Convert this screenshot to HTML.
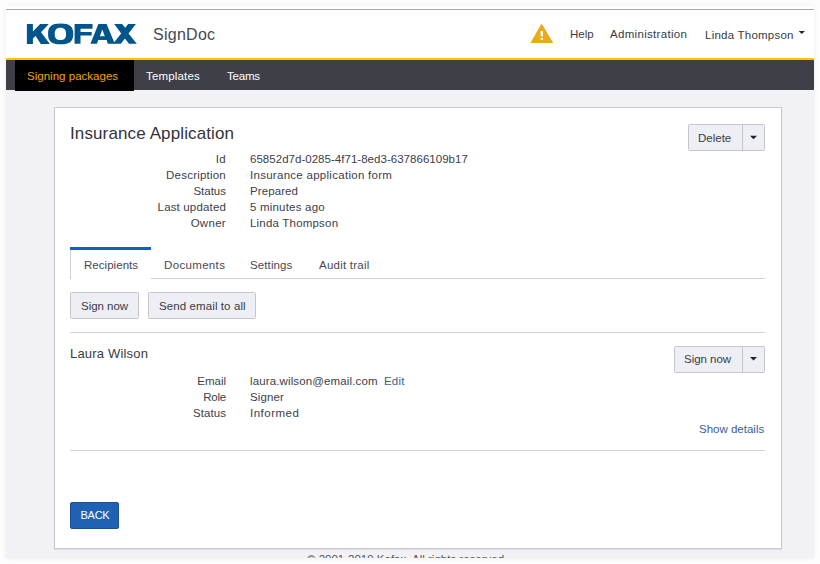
<!DOCTYPE html>
<html><head><meta charset="utf-8">
<style>
*{margin:0;padding:0;box-sizing:border-box}
html,body{width:820px;height:564px;overflow:hidden;background:#fdfdfd;font-family:"Liberation Sans",sans-serif;color:#333}
.abs{position:absolute}
#page{position:absolute;left:6px;top:6px;width:808px;height:552px;background:#f2f2f6;box-shadow:0 0 5px rgba(0,0,0,0.07);overflow:hidden}
#w{position:absolute;left:-6px;top:-6px;width:820px;height:564px}
.t{position:absolute;white-space:nowrap;font-size:11.5px;line-height:14px;color:#3a3a44}
.btn{position:absolute;background:#eeeff4;border:1px solid #c6c6cb;border-radius:1.5px}
.lbl{position:absolute;left:120px;width:106px;text-align:right;white-space:nowrap;font-size:11.5px;line-height:14px;letter-spacing:0.3px;color:#40404a}
.val{position:absolute;left:250px;white-space:nowrap;font-size:11.5px;line-height:14px;color:#40404a}
.hr{position:absolute;height:1px;background:#d2d2d6}
.lnk{color:#3d5aa8}
</style></head>
<body>
<div id="page"><div id="w">
  <!-- header -->
  <div class="abs" style="left:0;top:0;width:820px;height:58px;background:#fff"></div>
  <div class="abs" style="left:0;top:9px;width:820px;height:1px;background:#ababab"></div>
  <div class="t" style="left:153px;top:25px;font-size:16px;line-height:20px;letter-spacing:0.27px;color:#484852">SignDoc</div>
  <div class="t" style="left:570px;top:27px;letter-spacing:0.03px">Help</div>
  <div class="t" style="left:610px;top:27px;letter-spacing:0.31px">Administration</div>
  <div class="t" style="left:705px;top:28px;letter-spacing:0.23px">Linda Thompson</div>
  <div class="abs" style="left:0;top:58px;width:820px;height:2px;background:#fbc300"></div>
  <div class="abs" style="left:0;top:60px;width:820px;height:30px;background:#3e3f47"></div>
  <div class="abs" style="left:15px;top:60px;width:119px;height:31px;background:#000"></div>
  <div class="t" style="left:27px;top:69px;letter-spacing:0.02px;color:#f0a500">Signing packages</div>
  <div class="t" style="left:146px;top:69px;letter-spacing:0.17px;color:#fff">Templates</div>
  <div class="t" style="left:227px;top:69px;letter-spacing:-0.2px;color:#fff">Teams</div>

  <!-- card -->
  <div class="abs" style="left:54px;top:107px;width:728px;height:442px;background:#fff;border:1px solid #c9c9cd;box-shadow:0 1px 1px rgba(0,0,0,0.08)"></div>
  <div class="t" style="left:70px;top:124px;font-size:17px;line-height:20px;letter-spacing:0.12px;color:#33333c">Insurance Application</div>
  <div class="btn" style="left:688px;top:124px;width:77px;height:27px"></div>
  <div class="abs" style="left:742px;top:125px;width:1px;height:25px;background:#c6c6cb"></div>
  <div class="t" style="left:698px;top:131px">Delete</div>

  <div class="lbl" style="top:152px">Id</div>
  <div class="lbl" style="top:168px;letter-spacing:0.22px">Description</div>
  <div class="lbl" style="top:184px;letter-spacing:0">Status</div>
  <div class="lbl" style="top:200px;letter-spacing:0.16px">Last updated</div>
  <div class="lbl" style="top:216px">Owner</div>
  <div class="val" style="top:152px;letter-spacing:0.03px">65852d7d-0285-4f71-8ed3-637866109b17</div>
  <div class="val" style="top:168px;letter-spacing:0.28px">Insurance application form</div>
  <div class="val" style="top:184px;letter-spacing:0.1px">Prepared</div>
  <div class="val" style="top:200px;letter-spacing:0.2px">5 minutes ago</div>
  <div class="val" style="top:216px;letter-spacing:0.2px">Linda Thompson</div>

  <!-- tabs -->
  <div class="hr" style="left:151px;top:278px;width:614px"></div>
  <div class="abs" style="left:70px;top:247px;width:81px;height:32px;background:#fff;border-left:1px solid #d2d2d6"></div>
  <div class="abs" style="left:70px;top:247px;width:81px;height:3px;background:#175ebd"></div>
  <div class="t" style="left:84px;top:258px;letter-spacing:0.04px;color:#484852">Recipients</div>
  <div class="t" style="left:164px;top:258px;letter-spacing:0.34px;color:#484852">Documents</div>
  <div class="t" style="left:250px;top:258px;letter-spacing:0.11px;color:#484852">Settings</div>
  <div class="t" style="left:319px;top:258px;letter-spacing:0.23px;color:#484852">Audit trail</div>

  <div class="btn" style="left:70px;top:292px;width:69px;height:27px"></div>
  <div class="t" style="left:81px;top:299px;letter-spacing:-0.03px">Sign now</div>
  <div class="btn" style="left:148px;top:292px;width:108px;height:27px"></div>
  <div class="t" style="left:159px;top:299px;letter-spacing:0.1px">Send email to all</div>

  <!-- recipient -->
  <div class="hr" style="left:70px;top:332px;width:695px"></div>
  <div class="t" style="left:70px;top:346px;font-size:13px;line-height:16px;letter-spacing:0.19px">Laura Wilson</div>
  <div class="btn" style="left:674px;top:346px;width:91px;height:27px"></div>
  <div class="abs" style="left:742px;top:347px;width:1px;height:25px;background:#c6c6cb"></div>
  <div class="t" style="left:684px;top:352px;letter-spacing:-0.03px">Sign now</div>
  <div class="lbl" style="top:374px;letter-spacing:0">Email</div>
  <div class="lbl" style="top:390px;letter-spacing:-0.2px">Role</div>
  <div class="lbl" style="top:406px;letter-spacing:0.05px">Status</div>
  <div class="val" style="top:374px;letter-spacing:0.13px">laura.wilson@email.com</div>
  <div class="t lnk" style="left:384px;top:374px;letter-spacing:0.2px">Edit</div>
  <div class="val" style="top:390px;letter-spacing:0.1px">Signer</div>
  <div class="val" style="top:406px;letter-spacing:0.5px">Informed</div>
  <div class="t lnk" style="left:699px;top:422px">Show details</div>
  <div class="hr" style="left:70px;top:450px;width:695px"></div>

  <div class="abs" style="left:70px;top:502px;width:49px;height:27px;background:#1f62b3;border:1px solid #1a4f92;border-radius:2px"></div>
  <div class="t" style="left:80.5px;top:508px;font-size:11px;letter-spacing:-0.27px;color:#fff">BACK</div>
  <div class="t" style="left:307px;top:552px;letter-spacing:0;color:#555">&copy; 2001-2019 Kofax. All rights reserved.</div>

  <svg class="abs" style="left:0;top:0" width="820" height="564" viewBox="0 0 820 564">
    <g fill="#00558c" fill-rule="evenodd">
      <path d="M26.9,23.9H32.9V31.6L40.1,23.9H48.8L41,32.2L49.9,43.9H40.8L35.6,36L32.9,38.4V43.9H26.9Z"/>
      <path d="M60.65,23.50C69.72,23.50 73.25,26.41 73.25,33.90C73.25,41.39 69.72,44.30 60.65,44.30C51.58,44.30 48.05,41.39 48.05,33.90C48.05,26.41 51.58,23.50 60.65,23.50ZM60.40,27.70C64.28,27.70 66.10,29.68 66.10,33.90C66.10,38.12 64.28,40.10 60.40,40.10C56.52,40.10 54.70,38.12 54.70,33.90C54.70,29.68 56.52,27.70 60.40,27.70Z"/>
      <path d="M74.6,24H92.5V28.7H80.5V32H91.7V35.6H80.5V43.8H74.6Z"/>
      <path d="M90.4,43.7L98.4,24.1H106.6L114.8,43.7H107.8L106.6,40H98.2L97,43.7ZM102.3,29.6L104.8,36.3H99.9Z"/>
      <path d="M114.2,24.1H122.1L125.2,27.8L128.2,24.1H135.9L128.5,33.6L136.8,43.7H129L124.9,38.5L120.8,43.7H113L121.2,33.6Z"/>
    </g>
    <path d="M541.6,23.4L553.3,42.9H530.4Z" fill="#e9ab1c"/>
    <rect x="540.6" y="31.2" width="2.4" height="5.3" fill="#fff"/>
    <rect x="540.6" y="38" width="2.4" height="1.8" fill="#fff"/>
    <path d="M798.6,31H805L801.8,34Z" fill="#222"/>
    <path d="M750,135.7H757L753.5,139.2Z" fill="#222"/>
    <path d="M750,357H757L753.5,360.5Z" fill="#222"/>
  </svg>
</div></div>
</body></html>
